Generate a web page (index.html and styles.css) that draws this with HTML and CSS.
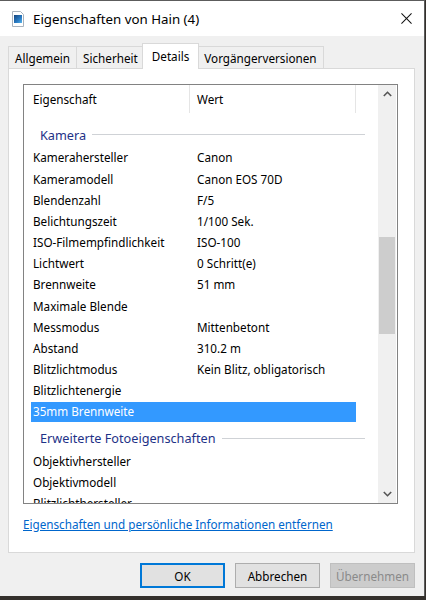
FILE: index.html
```html
<!DOCTYPE html>
<html lang="de">
<head>
<meta charset="utf-8">
<title>Eigenschaften von Hain (4)</title>
<link rel="stylesheet" href="styles.css">
</head>
<body>
<div class="window">
  <header class="titlebar">
    <svg class="app-icon" viewBox="0 0 12 16" aria-hidden="true">
      <defs>
        <linearGradient id="pic" x1="0" y1="0" x2="1" y2="1">
          <stop offset="0" stop-color="#16457e"/>
          <stop offset="0.6" stop-color="#2a7cc4"/>
          <stop offset="1" stop-color="#59b6ec"/>
        </linearGradient>
      </defs>
      <path d="M0.5 0.5 H8.5 L11.5 3.5 V15.5 H0.5 Z" fill="#fff" stroke="#a9b3bd"/>
      <rect x="2" y="4" width="8" height="8" fill="url(#pic)"/>
    </svg>
    <span class="title">Eigenschaften von Hain (4)</span>
    <svg class="close" viewBox="0 0 12 12" aria-hidden="true">
      <path d="M0.5 0.5 L11.5 11.5 M11.5 0.5 L0.5 11.5" stroke="#111" stroke-width="1.1" fill="none"/>
    </svg>
  </header>

  <nav class="tabs">
    <div class="tab">Allgemein</div>
    <div class="tab">Sicherheit</div>
    <div class="tab active">Details</div>
    <div class="tab">Vorgängerversionen</div>
  </nav>

  <section class="panel">
    <div class="listview">
      <div class="lv-main">
        <div class="lv-header">
          <div class="col col-name">Eigenschaft</div>
          <div class="col col-value">Wert</div>
          <div class="col col-rest"></div>
        </div>
        <div class="lv-body">
          <div class="lv-content">
            <div class="row partial"><span class="cell"></span><span class="cell"></span></div>
            <div class="group"><span>Kamera</span></div>
            <div class="row"><span class="cell">Kamerahersteller</span><span class="cell">Canon</span></div>
            <div class="row"><span class="cell">Kameramodell</span><span class="cell">Canon EOS 70D</span></div>
            <div class="row"><span class="cell">Blendenzahl</span><span class="cell">F/5</span></div>
            <div class="row"><span class="cell">Belichtungszeit</span><span class="cell">1/100 Sek.</span></div>
            <div class="row"><span class="cell">ISO-Filmempfindlichkeit</span><span class="cell">ISO-100</span></div>
            <div class="row"><span class="cell">Lichtwert</span><span class="cell">0 Schritt(e)</span></div>
            <div class="row"><span class="cell">Brennweite</span><span class="cell">51 mm</span></div>
            <div class="row"><span class="cell">Maximale Blende</span><span class="cell"></span></div>
            <div class="row"><span class="cell">Messmodus</span><span class="cell">Mittenbetont</span></div>
            <div class="row"><span class="cell">Abstand</span><span class="cell">310.2 m</span></div>
            <div class="row"><span class="cell">Blitzlichtmodus</span><span class="cell">Kein Blitz, obligatorisch</span></div>
            <div class="row"><span class="cell">Blitzlichtenergie</span><span class="cell"></span></div>
            <div class="row selected"><span class="cell">35mm Brennweite</span><span class="cell"></span></div>
            <div class="group"><span>Erweiterte Fotoeigenschaften</span></div>
            <div class="row"><span class="cell">Objektivhersteller</span><span class="cell"></span></div>
            <div class="row"><span class="cell">Objektivmodell</span><span class="cell"></span></div>
            <div class="row"><span class="cell">Blitzlichthersteller</span><span class="cell"></span></div>
          </div>
        </div>
      </div>
      <div class="scrollbar">
        <div class="sb-btn">
          <svg viewBox="0 0 9 6" aria-hidden="true"><polyline points="0.8,5 4.5,1.3 8.2,5" fill="none" stroke="#555" stroke-width="1.6"/></svg>
        </div>
        <div class="sb-track">
          <div class="sb-thumb" style="margin-top:134px;height:97px"></div>
        </div>
        <div class="sb-btn">
          <svg viewBox="0 0 9 6" aria-hidden="true"><polyline points="0.8,1 4.5,4.7 8.2,1" fill="none" stroke="#555" stroke-width="1.6"/></svg>
        </div>
      </div>
    </div>
    <a class="remove-link" href="#">Eigenschaften und persönliche Informationen entfernen</a>
  </section>

  <footer class="buttons">
    <button class="btn default">OK</button>
    <button class="btn">Abbrechen</button>
    <button class="btn" disabled>Übernehmen</button>
  </footer>
</div>
</body>
</html>
```

FILE: styles.css
```css
* { box-sizing: border-box; }

html, body {
  margin: 0;
  padding: 0;
}

body {
  width: 426px;
  height: 600px;
  overflow: hidden;
  background: #34302c;
  font-family: "Noto Sans", "Open Sans", sans-serif;
  font-size: 11.7px;
  color: #000;
}

.window {
  width: 425px;
  height: 596px;
  background: #f0f0f0;
  border-top: 1px solid #5c5c5c;
  border-right: 1px solid #5c5c5c;
  display: flex;
  flex-direction: column;
}

/* title bar */
.titlebar {
  flex: none;
  height: 35px;
  background: #fff;
  display: flex;
  align-items: center;
  padding-left: 12px;
}

.app-icon {
  width: 12px;
  height: 16px;
  margin-right: 9px;
}

.title {
  flex: 1;
  font-size: 13.3px;
  color: #000;
}

.close {
  width: 11px;
  height: 11px;
  margin-right: 12px;
}

/* tabs */
.tabs {
  flex: none;
  height: 32px;
  display: flex;
  align-items: flex-end;
  padding-left: 8px;
}

.tab {
  height: 22px;
  padding: 0 6px;
  border: 1px solid #d9d9d9;
  border-bottom: none;
  margin-right: -1px;
  display: flex;
  align-items: center;
  background: #f0f0f0;
}

.tab.active {
  height: 26px;
  margin: 0 -2px -1px -2px;
  padding: 0 9px 2px;
  background: #fff;
  position: relative;
  z-index: 1;
}

/* panel */
.panel {
  flex: none;
  height: 485px;
  margin: 0 9px 0 8px;
  background: #fff;
  border: 1px solid #d9d9d9;
  padding: 15px 16px 0 14px;
}

.listview {
  height: 420px;
  border: 1px solid #828282;
  display: flex;
  background: #fff;
}

.lv-main {
  flex: 1;
  display: flex;
  flex-direction: column;
  min-width: 0;
}

.lv-header {
  flex: none;
  height: 29px;
  display: flex;
}

.col {
  height: 28px;
  line-height: 28px;
  padding-left: 9px;
}

.col-name { width: 165px; }
.col-value { width: 166px; border-left: 1px solid #e5e5e5; padding-left: 7px; }
.col-rest { flex: 1; border-left: 1px solid #e5e5e5; }

.lv-body {
  flex: 1;
  overflow: hidden;
}

.lv-content {
  margin-top: -15.7px;
  display: flex;
  flex-direction: column;
}

.row {
  flex: none;
  height: 21.17px;
  width: 325px;
  margin-left: 7px;
  display: grid;
  grid-template-columns: 164px 1fr;
  line-height: 21px;
  white-space: nowrap;
}

.row .cell {
  padding-left: 2px;
  overflow: hidden;
}

.row.selected {
  padding: 1px 0;
  background: #3399ff;
  background-clip: content-box;
  color: #fff;
}

.row.selected .cell { line-height: 19px; }

.group {
  flex: none;
  height: 28px;
  width: 334px;
  margin-left: 7px;
  padding: 3px 0 0 9px;
  display: flex;
  align-items: center;
  font-size: 12.7px;
  color: #1e3287;
  white-space: nowrap;
}

.group::after {
  content: "";
  flex: 1;
  height: 1px;
  margin-left: 6px;
  background: #cfd2d6;
}

/* scrollbar */
.scrollbar {
  flex: none;
  width: 18px;
  margin-right: 1px;
  display: flex;
  flex-direction: column;
  background: #f0f0f0;
}

.sb-btn {
  flex: none;
  height: 18px;
  display: flex;
  align-items: center;
  justify-content: center;
}

.sb-btn svg {
  width: 9px;
  height: 6px;
}

.sb-track {
  flex: 1;
  display: flex;
  flex-direction: column;
  align-items: stretch;
}

.sb-thumb {
  flex: none;
  margin: 0 1px;
  background: #cdcdcd;
}

/* link */
.remove-link {
  display: inline-block;
  margin-top: 12px;
  color: #0066cc;
  text-decoration: underline;
  line-height: 17px;
}

/* buttons */
.buttons {
  flex: none;
  display: flex;
  justify-content: flex-end;
  gap: 10px;
  padding: 10px 9px 0 0;
}

.btn {
  width: 85px;
  height: 25px;
  font-family: inherit;
  font-size: 11.7px;
  color: #000;
  background: #e1e1e1;
  border: 1px solid #adadad;
  border-radius: 0;
  padding: 0;
}

.btn.default {
  border: 2px solid #0078d7;
}

.btn:disabled {
  background: #cccccc;
  border-color: #bfbfbf;
  color: #8a8a8a;
}
```
